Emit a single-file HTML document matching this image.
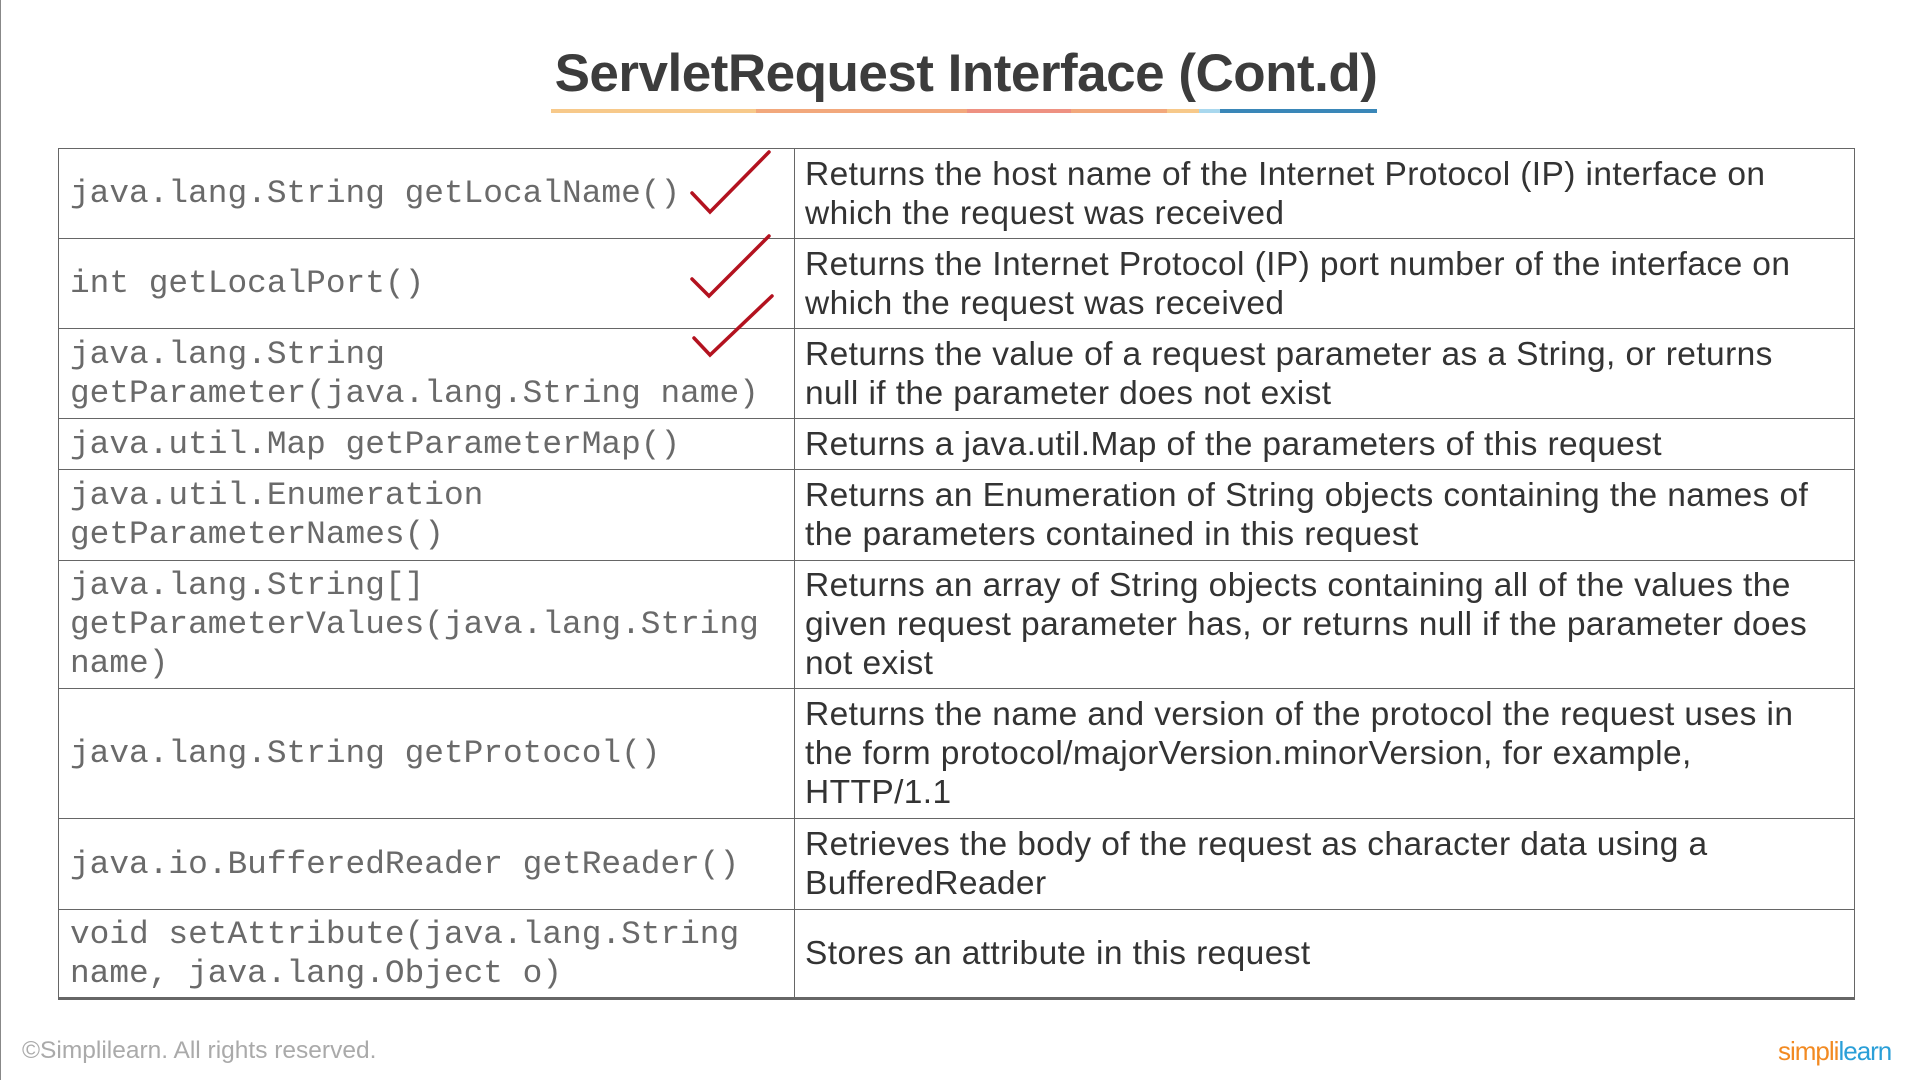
<!DOCTYPE html>
<html><head><meta charset="utf-8"><style>
html,body{margin:0;padding:0;background:#fff;width:1920px;height:1080px;overflow:hidden;position:relative;font-family:"Liberation Sans",sans-serif}
.title{position:absolute;left:0;width:1932px;top:43px;text-align:center;font-weight:bold;font-size:53px;color:#3c3c3c;letter-spacing:-0.5px}
.ul{position:absolute;top:109px;height:4px;}
table{position:absolute;left:58px;top:148px;width:1797px;border-collapse:collapse;}
td{border:1.5px solid #666;padding:0 10px;vertical-align:middle;}
td.m{font-family:"Liberation Mono",monospace;font-size:32.8px;color:#6a6a6a;width:714px;line-height:39px;padding-left:11px}
td.d{font-size:33.5px;letter-spacing:0.4px;color:#333;line-height:39px;white-space:nowrap}
tr:last-child td{border-bottom:3px solid #666}
.foot{position:absolute;left:22px;top:1037px;font-size:24.5px;color:#aaa}
.logo{position:absolute;left:1778px;top:1036px;font-size:26px;letter-spacing:-1px}
</style></head><body>
<div style="position:absolute;left:0;top:0;width:1px;height:1080px;background:#888"></div>
<div class="title">ServletRequest Interface (Cont.d)</div>
<div class="ul" style="left:551px;width:205px;background:#f7c98a"></div>
<div class="ul" style="left:756px;width:211px;background:#f2a87c"></div>
<div class="ul" style="left:967px;width:104px;background:#ee9182"></div>
<div class="ul" style="left:1071px;width:96px;background:#f2a87c"></div>
<div class="ul" style="left:1167px;width:48px;background:#f7c98a"></div>
<div class="ul" style="left:1199px;width:56px;background:#a9d8ee"></div>
<div class="ul" style="left:1220px;width:157px;background:#3a87b8"></div>
<table>
<tr style="height:90px"><td class="m">java.lang.String getLocalName()</td><td class="d">Returns the host name of the Internet Protocol (IP) interface on<br>which the request was received</td></tr>
<tr style="height:90px"><td class="m">int getLocalPort()</td><td class="d">Returns the Internet Protocol (IP) port number of the interface on<br>which the request was received</td></tr>
<tr style="height:90px"><td class="m">java.lang.String<br>getParameter(java.lang.String name)</td><td class="d">Returns the value of a request parameter as a String, or returns<br>null if the parameter does not exist</td></tr>
<tr style="height:51px"><td class="m">java.util.Map getParameterMap()</td><td class="d">Returns a java.util.Map of the parameters of this request</td></tr>
<tr style="height:91px"><td class="m">java.util.Enumeration<br>getParameterNames()</td><td class="d">Returns an Enumeration of String objects containing the names of<br>the parameters contained in this request</td></tr>
<tr style="height:128px"><td class="m">java.lang.String[]<br>getParameterValues(java.lang.String<br>name)</td><td class="d">Returns an array of String objects containing all of the values the<br>given request parameter has, or returns null if the parameter does<br>not exist</td></tr>
<tr style="height:130px"><td class="m">java.lang.String getProtocol()</td><td class="d">Returns the name and version of the protocol the request uses in<br>the form protocol/majorVersion.minorVersion, for example,<br>HTTP/1.1</td></tr>
<tr style="height:91px"><td class="m">java.io.BufferedReader getReader()</td><td class="d">Retrieves the body of the request as character data using a<br>BufferedReader</td></tr>
<tr style="height:89px"><td class="m">void setAttribute(java.lang.String<br>name, java.lang.Object o)</td><td class="d">Stores an attribute in this request</td></tr>
</table>
<svg style="position:absolute;left:0;top:0" width="1920" height="1080">
<g fill="none" stroke="#b3121f" stroke-width="3.5" stroke-linecap="round">
<polyline points="692,193 710,212 769,152"/>
<polyline points="692,279 709,296 769,236"/>
<polyline points="694,338 710,355 772,296"/>
</g></svg>
<div class="foot">©Simplilearn. All rights reserved.</div>
<div class="logo"><span style="color:#f28a22">simpli</span><span style="color:#2a9fd8">learn</span></div>
</body></html>
